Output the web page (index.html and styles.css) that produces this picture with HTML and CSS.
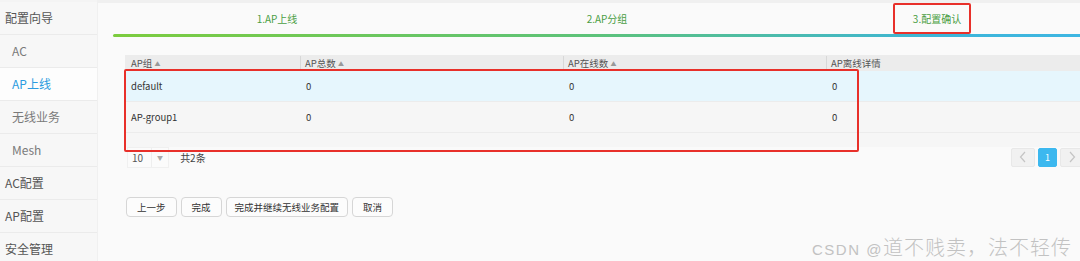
FILE: index.html
```html
<!DOCTYPE html>
<html lang="zh-CN">
<head>
    <meta charset="UTF-8">
    <title>配置向导 - AP上线</title>
    <link rel="stylesheet" href="styles.css">
</head>
<body>
    <div class="page">
        <div class="sidebar">
            <div class="nav-item">配置向导</div>
            <div class="nav-item sub">AC</div>
            <div class="nav-item sub active">AP上线</div>
            <div class="nav-item sub">无线业务</div>
            <div class="nav-item sub">Mesh</div>
            <div class="nav-item">AC配置</div>
            <div class="nav-item">AP配置</div>
            <div class="nav-item">安全管理</div>
        </div>

        <div class="main">
            <div class="steps">
                <div class="step">1.AP上线</div>
                <div class="step">2.AP分组</div>
                <div class="step">3.配置确认</div>
            </div>
            <div class="progress"></div>

            <div class="content">
                <div class="table">
                    <div class="row head">
                        <div class="cell c1">AP组 <span class="sort">▲</span></div>
                        <div class="cell c2">AP总数 <span class="sort">▲</span></div>
                        <div class="cell c3">AP在线数 <span class="sort">▲</span></div>
                        <div class="cell c4">AP离线详情</div>
                    </div>
                    <div class="row hover">
                        <div class="cell c1">default</div>
                        <div class="cell c2">0</div>
                        <div class="cell c3">0</div>
                        <div class="cell c4">0</div>
                    </div>
                    <div class="row">
                        <div class="cell c1">AP-group1</div>
                        <div class="cell c2">0</div>
                        <div class="cell c3">0</div>
                        <div class="cell c4">0</div>
                    </div>
                    <div class="row empty"></div>
                </div>

                <div class="pager-bar">
                    <div class="page-size">
                        <span class="size-val">10</span>
                        <span class="size-arrow">▼</span>
                    </div>
                    <span class="total">共2条</span>
                    <div class="pager">
                        <span class="pg">
                            <svg width="8" height="12" viewBox="0 0 8 12"><path d="M6 1 L1.5 6 L6 11" fill="none" stroke="#c4c4c4" stroke-width="1.2"/></svg>
                        </span>
                        <span class="pg current">1</span>
                        <span class="pg">
                            <svg width="8" height="12" viewBox="0 0 8 12"><path d="M2 1 L6.5 6 L2 11" fill="none" stroke="#c4c4c4" stroke-width="1.2"/></svg>
                        </span>
                    </div>
                </div>

                <div class="actions">
                    <button>上一步</button>
                    <button>完成</button>
                    <button class="wide">完成并继续无线业务配置</button>
                    <button>取消</button>
                </div>
            </div>
        </div>
    </div>

    <div class="mark mark-step"></div>
    <div class="mark mark-table"></div>
    <div class="watermark"><span class="wm-latin">CSDN @</span>道不贱卖，法不轻传</div>
</body>
</html>
```

FILE: styles.css
```css
body {
    margin: 0;
    width: 1080px;
    height: 261px;
    overflow: hidden;
    font-family: "Microsoft YaHei", "Noto Sans CJK SC", "Liberation Sans", sans-serif;
    background: #fafafa;
    color: #333;
    position: relative;
}
.page {
    display: flex;
    height: 261px;
}
.sidebar {
    width: 97px;
    flex-shrink: 0;
    background: #f4f4f4;
    padding-top: 2px;
    border-right: 1px solid #f0f0f0;
}
.nav-item {
    height: 32px;
    line-height: 32px;
    font-size: 12px;
    color: #555;
    padding-left: 5px;
    border-bottom: 1px solid #ebebeb;
    background: #f7f7f7;
}
.nav-item.sub {
    padding-left: 12px;
    color: #7a7a7a;
}
.nav-item.active {
    color: #2b9be0;
    background: #fdfdfd;
}
.main {
    flex: 1;
    min-width: 0;
    display: flex;
    flex-direction: column;
    border-top: 3px solid #f0f0f0;
}
.steps {
    display: flex;
    height: 31px;
    align-items: center;
    padding-left: 14px;
}
.step {
    flex: 0 0 330px;
    text-align: center;
    font-size: 10px;
    color: #4a9e44;
}
.progress {
    height: 3px;
    margin-left: 15px;
    border-radius: 2px 0 0 2px;
    background: linear-gradient(to right, #7ccc3e 0%, #5cc27a 50%, #3cb5d8 85%, #3eb6e2 100%);
}
.content {
    padding: 18px 0 0 27px;
}
.table {
    font-size: 9.5px;
}
.row {
    display: flex;
    height: 30px;
    align-items: center;
    background: #f6f6f6;
    border-bottom: 1px solid #ececec;
}
.row.head {
    height: 16px;
    background: #ececec;
    color: #555;
    border-bottom: none;
}
.row.hover {
    background: #e6f6fd;
}
.row.empty {
    height: 14px;
    border-bottom: none;
}
.cell {
    padding-left: 6px;
    box-sizing: border-box;
}
.head .cell {
    border-left: 1px solid #d8d8d8;
    padding-left: 4px;
}
.head .c1 {
    border-left: none;
    padding-left: 6px;
}
.c1 { width: 175px; }
.c2 { width: 263px; }
.c3 { width: 263px; }
.c4 { flex: 1; }
.sort {
    font-size: 6px;
    color: #999;
    vertical-align: 1px;
}
.pager-bar {
    display: flex;
    align-items: center;
    height: 20px;
}
.page-size {
    display: flex;
    height: 19px;
    border: 1px solid #f0f0f0;
    background: #fbfbfb;
    font-size: 10px;
    color: #555;
    align-items: center;
    margin-left: 2px;
}
.size-val {
    padding: 0 8px 0 4px;
    border-right: 1px solid #eee;
    line-height: 19px;
}
.size-arrow {
    font-size: 6px;
    color: #aaa;
    padding: 0 5px;
}
.total {
    font-size: 10px;
    color: #444;
    margin-left: 11px;
}
.pager {
    margin-left: auto;
    display: flex;
    gap: 3px;
    margin-right: -4px;
}
.pg {
    width: 24px;
    height: 19px;
    display: flex;
    align-items: center;
    justify-content: center;
    font-size: 9px;
    background: #f1f1f1;
    border: 1px solid #e8e8e8;
    border-radius: 2px;
    box-sizing: border-box;
}
.pg.current {
    width: 19px;
    background: #3cb8ef;
    border-color: #3cb8ef;
    color: #fff;
}
.actions {
    display: flex;
    gap: 4px;
    margin-top: 30px;
    margin-left: 1px;
}
button {
    height: 20px;
    padding: 0 10px;
    font-family: inherit;
    font-size: 9.5px;
    color: #333;
    background: #fcfcfc;
    border: 1px solid #d6d6d6;
    border-radius: 4px;
}
button.wide {
    padding: 0 8px;
}
.mark {
    position: absolute;
    border: 2px solid #e8302a;
    border-radius: 2px;
    box-sizing: border-box;
}
.mark-step {
    left: 893px;
    top: 3px;
    width: 78px;
    height: 31px;
}
.mark-table {
    left: 124px;
    top: 69px;
    width: 735px;
    height: 83px;
}
.watermark {
    position: absolute;
    left: 812px;
    top: 232px;
    font-size: 20px;
    font-weight: 300;
    color: #c2c2c2;
    font-family: "Noto Sans CJK SC", sans-serif;
    letter-spacing: 1px;
}
.wm-latin {
    font-family: "Liberation Sans", sans-serif;
    font-weight: normal;
    font-size: 15px;
    letter-spacing: 1.5px;
}
```
